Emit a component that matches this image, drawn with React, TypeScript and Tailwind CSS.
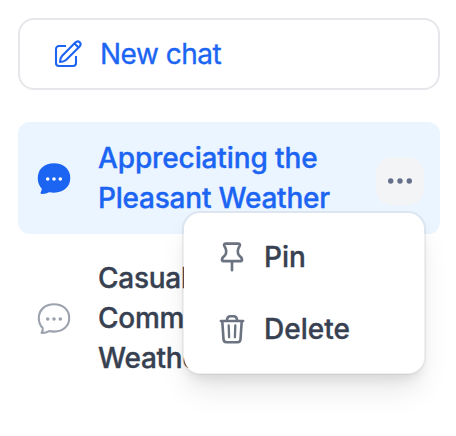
import React from "react";

const bubblePath =
  "M17 2.200C8 2.200 1.800 8 1.800 16.200c0 4 1.300 7.200 3.900 9.700.4 1.900-.1 3.500-1.100 5 2.700.2 5.200-.5 7.600-1.800 1.600.4 3.200.5 4.900.5 9.100 0 15.100-5.600 15.100-13.700S26 2.200 17 2.200Z";

function ChatIcon({ active }: { active?: boolean }) {
  return (
    <svg
      viewBox="0 0 34 34"
      className={active ? "size-[34px] shrink-0 text-[#1c64f2]" : "size-[34px] shrink-0 text-[#9ca3af]"}
      fill="none"
      stroke="currentColor"
      strokeWidth="2.100"
      strokeLinejoin="round"
    >
      <path d={bubblePath} fill={active ? "currentColor" : "none"} />
      <g fill={active ? "#fff" : "currentColor"} stroke="none">
        <circle cx="10.700" cy="17" r="1.800" />
        <circle cx="17" cy="17" r="1.800" />
        <circle cx="23.300" cy="17" r="1.800" />
      </g>
    </svg>
  );
}

function EditIcon() {
  return (
    <svg viewBox="0 0 28 28" className="size-7 shrink-0" fill="none" stroke="currentColor" strokeWidth="2.100" strokeLinecap="round" strokeLinejoin="round">
      <path d="M12 6H5a3 3 0 0 0-3 3v14a3 3 0 0 0 3 3h14a3 3 0 0 0 3-3v-7" strokeLinecap="butt" />
      <path d="M6 22c.1-2.400.6-4.500 2-6L21.300 2.600c1.500-1.400 3.200-1.500 4.400-.3s1.100 2.900-.3 4.400L12 20c-1.500 1.400-3.600 1.900-6 2ZM20.600 3.600l3.800 3.800" />
    </svg>
  );
}

function PinIcon() {
  return (
    <svg viewBox="0 0 28 32" className="h-8 w-7 shrink-0" fill="none" stroke="currentColor" strokeWidth="2.600" strokeLinecap="round" strokeLinejoin="round">
      <path d="M7.500 2.600h13c1.500 0 1.800 1.300 1 2.600-2.400 3.700-2.400 6.200-.5 9.200 1.400 1 2.600 2.200 3 4.100.1 1-.3 1.600-1.200 1.600H5.200c-.9 0-1.300-.6-1.200-1.600.4-1.900 1.600-3.100 3-4.100 1.900-3 1.900-5.500-.5-9.200-.8-1.300-.5-2.600 1-2.600ZM14 20.500v8.800" />
    </svg>
  );
}

function TrashIcon() {
  return (
    <svg viewBox="0 0 28 32" className="h-8 w-7 shrink-0" fill="none" stroke="currentColor" strokeWidth="2.600" strokeLinecap="round" strokeLinejoin="round">
      <path d="M2.900 8h22.200M8.800 7.500c.3-2.700 1.600-4.200 3.700-4.200h3c2.100 0 3.400 1.500 3.700 4.200M4.300 8.500l1.200 17.700c.1 2 1.300 3 3 3h11c1.700 0 2.900-1 3-3L23.700 8.500" />
      <path d="m10.700 12.500.4 11.800M17.300 12.500l-.4 11.800" strokeWidth="2.300" />
    </svg>
  );
}

export default function App() {
  return (
    <div className="h-[436px] w-[456px] overflow-hidden bg-white pt-[18px] pl-[18px] font-['Inter',sans-serif] text-[28px] [-webkit-text-stroke:0.35px_currentColor]">
      <button className="flex h-[72px] w-[422px] items-center gap-[18px] rounded-2xl border-2 border-[#e5e7eb] pl-[34px] text-[#1c64f2]">
        <EditIcon />
        <span className="tracking-[-0.500px]">New chat</span>
      </button>

      <div className="mt-8 flex h-28 w-[422px] items-center rounded-xl bg-[#ebf5ff] pl-[19px] font-medium text-[#1c64f2]">
        <div className="mt-0.5 flex">
          <ChatIcon active />
        </div>
        <p className="ml-[27px] w-[278px] leading-10">
          <span className="tracking-[-0.120px]">Appreciating the</span>
          <br />
          <span className="tracking-[-0.220px]">Pleasant Weather</span>
        </p>
        <div className="relative mt-1.5">
          <button className="flex size-12 items-center justify-center rounded-2xl bg-[#f3f4f6] text-[#64708a]">
            <svg viewBox="0 0 26 8" className="h-2 w-[26px]" fill="currentColor">
              <circle cx="3.700" cy="4" r="2.700" />
              <circle cx="13" cy="4" r="2.700" />
              <circle cx="22.300" cy="4" r="2.700" />
            </svg>
          </button>
          <div className="absolute top-[54px] right-[-2px] z-10 h-[164px] w-[244px] rounded-[18px] border-2 border-black/[0.06] bg-white bg-clip-padding pt-2 shadow-[0_20px_30px_-6px_rgba(0,0,0,0.1),0_8px_12px_-4px_rgba(0,0,0,0.08)]">
            <div className="flex h-[72px] items-center gap-[18px] pl-[34px] text-[#6b7280]">
              <PinIcon />
              <span className="text-[#374151]">Pin</span>
            </div>
            <div className="flex h-[72px] items-center gap-[18px] pl-[34px] text-[#6b7280]">
              <TrashIcon />
              <span className="text-[#374151]">Delete</span>
            </div>
          </div>
        </div>
      </div>

      <div className="mt-2 flex h-[152px] w-[422px] items-center rounded-xl pl-[19px] font-medium text-[#374151]">
        <div className="mt-0.5 flex">
          <ChatIcon />
        </div>
        <p className="ml-[27px] w-[278px] leading-10 tracking-[-0.250px]">
          Casual
          <br />
          Comm
          <br />
          Weather
        </p>
      </div>
    </div>
  );
}
